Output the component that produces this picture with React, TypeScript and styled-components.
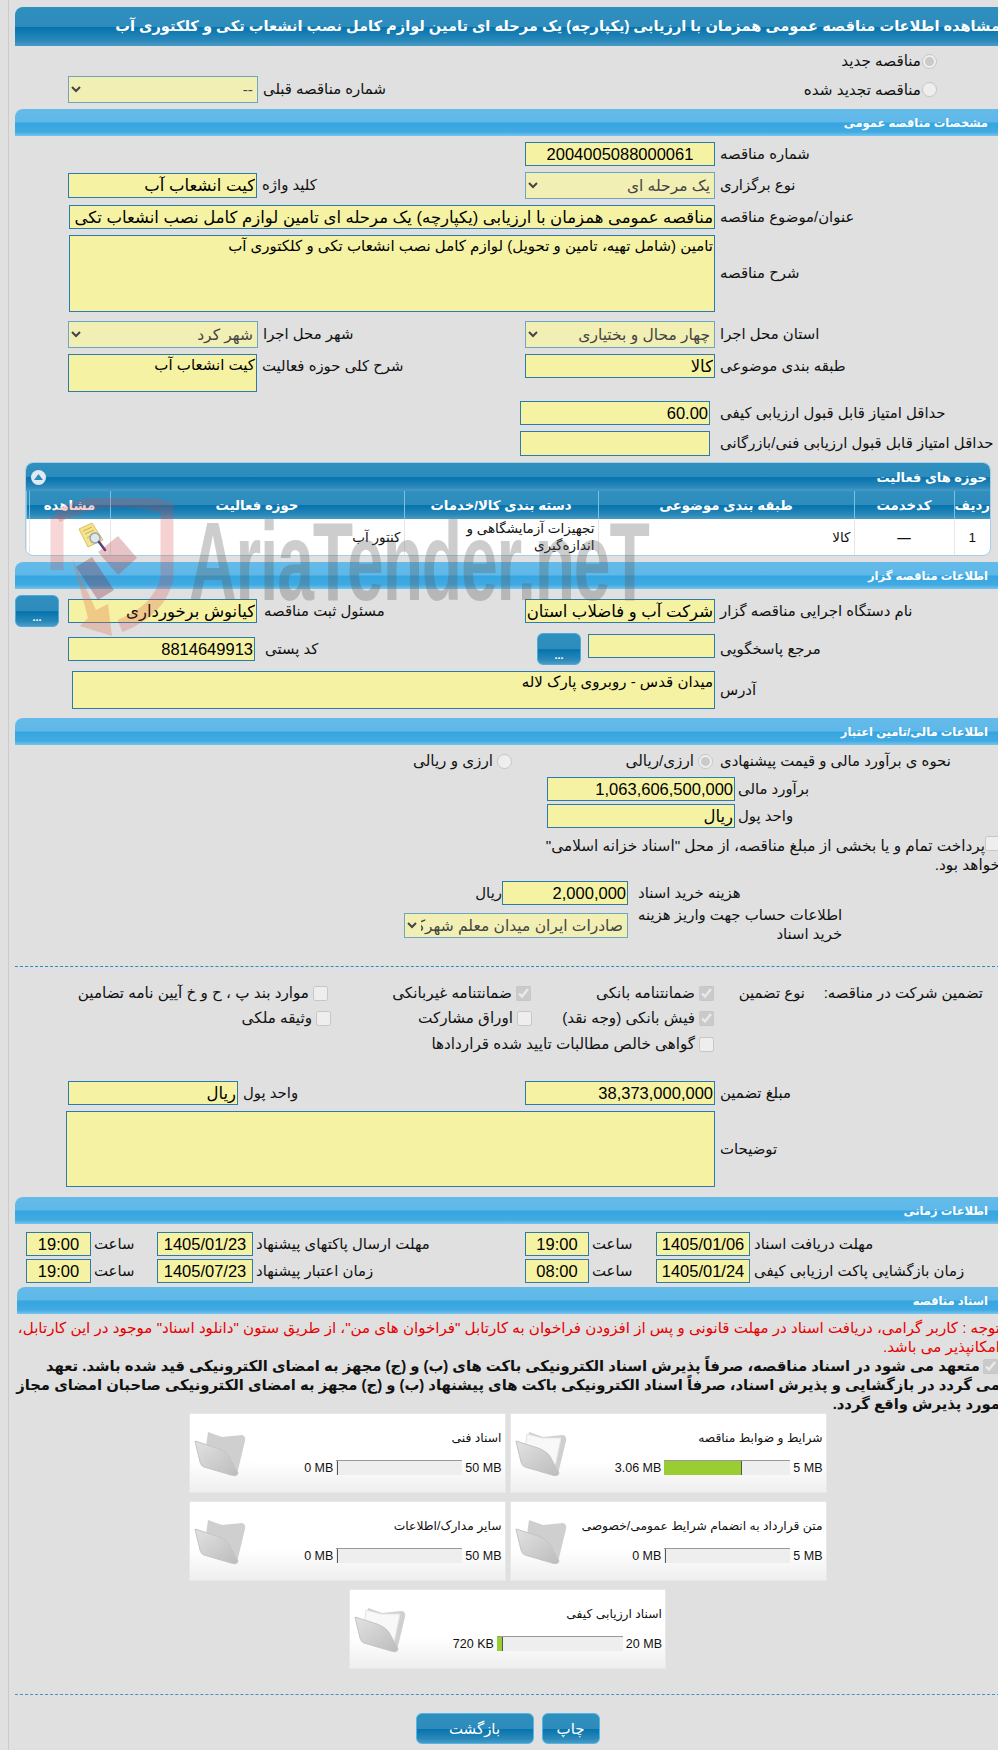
import React from "react";
import styled, { createGlobalStyle } from "styled-components";

const GlobalStyle = createGlobalStyle`
  html, body {
    margin: 0;
    height: 1750px;
    overflow: hidden;
    background: #e0e0e0;
  }
  body {
    font-family: "Liberation Sans", "DejaVu Sans", sans-serif;
    font-size: 14px;
    color: #111;
  }
`;

const darkBar = "linear-gradient(#2f8fbe 0%, #2d8cbc 50%, #0573ad 52%, #2a88b9 85%, #4a9bc6 100%)";
const lightBar = "linear-gradient(#64bbea 0%, #5fb8e8 48%, #35a5e0 52%, #42aae2 85%, #76c5ee 100%)";

const Shell = styled.div`
  position: relative;
  margin-left: 8px;
  width: 992px;
  height: 1750px;
  padding: 7px 0 0 6px;
  box-sizing: border-box;
  border-left: 1px solid #cbcbcb;
`;

const Page = styled.div`
  width: 985px;
  direction: rtl;
`;

const TitleBar = styled.h1`
  margin: 0;
  height: 39px;
  line-height: 39px;
  background: ${darkBar};
  border-top-left-radius: 8px;
  color: #fff;
  font-size: 14.6px;
  font-weight: bold;
  white-space: nowrap;
  overflow: hidden;
`;

const SectionBar = styled.div<{ $mt?: number; $inset?: number }>`
  margin: ${(p) => p.$mt ?? 6}px 0 0 ${(p) => p.$inset ?? 0}px;
  height: 27px;
  line-height: 28px;
  padding-right: 12px;
  background: ${lightBar};
  border-top-left-radius: 8px;
  color: #fff;
  font-size: 11.5px;
  font-weight: bold;
`;

const FormRow = styled.div<{ $h: number; $mt?: number; $top?: boolean }>`
  display: flex;
  height: ${(p) => p.$h}px;
  margin-top: ${(p) => p.$mt ?? 6}px;
  align-items: ${(p) => (p.$top ? "flex-start" : "center")};
`;

const Label = styled.label<{ $w: number; $pad?: number; $dy?: number }>`
  flex: none;
  width: ${(p) => p.$w}px;
  box-sizing: border-box;
  padding-left: ${(p) => p.$pad ?? 5}px;
  padding-top: ${(p) => p.$dy ?? 0}px;
  font-size: 14.9px;
  line-height: 19px;
  white-space: nowrap;
  display: flex;
  justify-content: flex-end;
`;

const TextInput = styled.input<{ $w: number; $h?: number; $center?: boolean; $shift?: number }>`
  flex: none;
  width: ${(p) => p.$w}px;
  height: ${(p) => p.$h ?? 24}px;
  margin: 0 0 ${(p) => p.$shift ?? 0}px 0;
  box-sizing: border-box;
  padding: 0 1px;
  border: 1px solid #2b7cab;
  background: #f5f3a3;
  color: #000;
  font-family: inherit;
  font-size: 16.5px;
  text-align: ${(p) => (p.$center ? "center" : "right")};
  outline: none;
`;

const TextArea = styled.textarea<{ $w: number; $h: number }>`
  flex: none;
  display: block;
  width: ${(p) => p.$w}px;
  height: ${(p) => p.$h}px;
  margin: 0;
  box-sizing: border-box;
  padding: 1px;
  border: 1px solid #2b7cab;
  background: #f5f3a3;
  color: #000;
  font-family: inherit;
  font-size: 15px;
  line-height: 18px;
  resize: none;
  overflow: hidden;
  outline: none;
`;

const Select = styled.select<{ $w: number; $h?: number }>`
  flex: none;
  width: ${(p) => p.$w}px;
  height: ${(p) => p.$h ?? 27}px;
  margin: 0;
  box-sizing: border-box;
  border: 1px solid #6da5c6;
  background-color: #f2efb4;
  color: #444;
  opacity: 1;
  font-family: inherit;
  font-size: 15.5px;
`;

const Option = styled.label<{ $w?: number; $gap?: number }>`
  flex: none;
  display: flex;
  align-items: center;
  gap: ${(p) => p.$gap ?? 4}px;
  width: ${(p) => (p.$w ? `${p.$w}px` : "auto")};
  white-space: nowrap;
  font-size: 15.2px;
  input {
    flex: none;
    margin: 0;
    width: 15px;
    height: 15px;
  }
`;

const RadioRow = styled.div<{ $h: number; $pr: number }>`
  display: flex;
  align-items: center;
  height: ${(p) => p.$h}px;
  padding-right: ${(p) => p.$pr}px;
`;

const DotsButton = styled.button<{ $gapRight?: number }>`
  flex: none;
  width: 44px;
  height: 32px;
  margin: 0 ${(p) => p.$gapRight ?? 0}px 0 0;
  padding: 0 0 3px;
  border: 1px solid #45aee0;
  border-radius: 6px;
  background: ${darkBar};
  color: #fff;
  font-family: inherit;
  font-size: 11px;
  font-weight: bold;
  display: flex;
  align-items: flex-end;
  justify-content: center;
`;

const Panel = styled.div`
  margin: 6px 9px 0 10px;
  height: 94px;
  border-radius: 8px;
  overflow: hidden;
  background: #fff;
  border: 1px solid #a6cfe6;
  box-sizing: border-box;
`;

const PanelHead = styled.div`
  display: flex;
  align-items: center;
  justify-content: space-between;
  height: 28px;
  padding: 0 3px 0 5px;
  background: ${darkBar};
  color: #fff;
  font-size: 13px;
  font-weight: bold;
`;

const Collapse = styled.span`
  width: 15px;
  height: 15px;
  border-radius: 50%;
  background: #dfeaf2;
  display: flex;
  align-items: center;
  justify-content: center;
`;

const GridTable = styled.table`
  width: 100%;
  table-layout: fixed;
  border-collapse: collapse;
`;

const HeadCell = styled.th<{ $w: number }>`
  box-sizing: border-box;
  width: ${(p) => p.$w}px;
  height: 28px;
  padding: 0;
  background: ${darkBar};
  border-left: 1px solid #7fc0e2;
  color: #fff;
  font-size: 13.3px;
  font-weight: bold;
`;

const Cell = styled.td<{ $align?: string }>`
  box-sizing: border-box;
  height: 36px;
  padding: 0 3px;
  border-left: 1px solid #e6e6e6;
  font-size: 13.5px;
  line-height: 17px;
  text-align: ${(p) => p.$align ?? "right"};
  svg {
    display: block;
  }
`;

const CheckNote = styled.div`
  margin-top: 8px;
  height: 38px;
  font-size: 15.3px;
  line-height: 19px;
  white-space: nowrap;
  input {
    margin: 0;
    width: 15px;
    height: 15px;
    vertical-align: top;
  }
`;

const InlineText = styled.span`
  flex: none;
  font-size: 14.9px;
`;

const Dashed = styled.div<{ $mt: number; $color?: string }>`
  margin-top: ${(p) => p.$mt}px;
  border-top: 1px dashed ${(p) => p.$color ?? "#2b8cc0"};
`;

const GuaranteeRow = styled.div<{ $mt: number }>`
  display: flex;
  align-items: center;
  height: 16px;
  margin-top: ${(p) => p.$mt}px;
`;

const GuaranteeHead = styled.span<{ $w: number; $pr?: number }>`
  flex: none;
  width: ${(p) => p.$w}px;
  box-sizing: border-box;
  padding-right: ${(p) => p.$pr ?? 0}px;
  font-size: 14.9px;
  white-space: nowrap;
`;

const RedNote = styled.p`
  margin: 4px 0 0;
  height: 38px;
  color: #e80000;
  font-size: 15.1px;
  line-height: 19px;
  white-space: nowrap;
`;

const BoldNote = styled.div`
  margin-top: 1px;
  height: 56px;
  font-size: 14.8px;
  font-weight: bold;
  line-height: 18.8px;
  white-space: nowrap;
  input {
    margin: 2px 2px 0 3px;
    width: 15px;
    height: 15px;
    vertical-align: top;
  }
`;

const TileGrid = styled.div`
  display: flex;
  flex-wrap: wrap;
  justify-content: center;
  gap: 8px 4px;
  width: 640px;
  margin: 0 auto;
`;

const Tile = styled.div`
  position: relative;
  display: flex;
  width: 317px;
  height: 80px;
  box-sizing: border-box;
  padding: 0 3px 0 4px;
  border: 1px solid #e8e8e8;
  background: linear-gradient(#fff 60%, #efefef 100%);
`;

const TileBody = styled.div`
  flex: 1;
  min-width: 0;
`;

const TileTitle = styled.div`
  margin-top: 16px;
  height: 16px;
  font-size: 12.3px;
  line-height: 16px;
  white-space: nowrap;
`;

const MeterRow = styled.div`
  display: flex;
  align-items: center;
  gap: 3px;
  margin-top: 14px;
`;

const MeterLabel = styled.span`
  direction: ltr;
  unicode-bidi: isolate;
  font-size: 12.5px;
  white-space: nowrap;
`;

const Meter = styled.div`
  flex: none;
  width: 126px;
  height: 14px;
  direction: ltr;
  border-top: 1px solid #999;
  background: #eee;
  box-sizing: content-box;
`;

const MeterFill = styled.div<{ $used: boolean }>`
  height: 100%;
  background: ${(p) => (p.$used ? "#9acd32" : "transparent")};
  border-right: 1px solid #555;
  box-sizing: border-box;
`;

const Folder = styled.svg`
  flex: none;
  align-self: flex-start;
  margin-top: 17px;
  width: 52px;
  height: 46px;
`;

const ActionRow = styled.div`
  display: flex;
  justify-content: center;
  gap: 8px;
  margin-top: 18px;
`;

const ActionButton = styled.button<{ $w: number }>`
  width: ${(p) => p.$w}px;
  height: 31px;
  padding: 0;
  border: 1px solid #52b5e6;
  border-radius: 6px;
  background: ${darkBar};
  color: #fff;
  font-family: inherit;
  font-size: 15px;
`;

const WatermarkLogo = styled.svg`
  position: absolute;
  left: 41px;
  top: 498px;
  width: 135px;
  height: 146px;
  pointer-events: none;
`;

const WatermarkText = styled.div`
  position: absolute;
  left: 180px;
  top: 506px;
  font-family: "Liberation Sans", sans-serif;
  font-size: 112px;
  line-height: 112px;
  font-weight: bold;
  letter-spacing: -2px;
  color: rgba(90, 90, 90, 0.3);
  white-space: nowrap;
  transform-origin: left top;
  transform: scaleX(0.59);
  pointer-events: none;
`;

const FolderIcon = ({ paper }: { paper: boolean }) => (
  <Folder viewBox="0 0 52 46">
    <defs>
      <linearGradient id="folderFront" x1="0" y1="0" x2="1" y2="1">
        <stop offset="0" stopColor="#e2e2e2" />
        <stop offset="1" stopColor="#bcbcbc" />
      </linearGradient>
    </defs>
    <path d="M14 1 L28 6 L38 5 L48 4 Q52 5 51 10 L43 43 L10 30 Z" fill="#cfcfcf" />
    {paper && <path d="M12 3 L27 7 L46 7 L40 36 L10 22 Z" fill="#f8f8f8" stroke="#e4e4e4" />}
    <path d="M1 10 L23 17 Q34 21 37 29 L44 42 Q43 46 37 44 L10 36 Q7 35 6 31 Z" fill="url(#folderFront)" stroke="#c4c4c4" />
  </Folder>
);

const DocIcon = () => (
  <svg width="29" height="30" viewBox="0 0 29 30">
    <path d="M1 7 L14 1 L25 18 L10 25 Z" fill="#f6e38f" stroke="#dcc05c" />
    <path d="M5 9 L14 5 M7 12 L16 8 M9 16 L14 13" stroke="#cdb052" strokeWidth="1" />
    <circle cx="17" cy="16" r="5" fill="#dde7ee" stroke="#98a4ad" strokeWidth="1.5" />
    <path d="M21 20 L27 28" stroke="#5a3f8a" strokeWidth="2.5" strokeLinecap="round" />
  </svg>
);

type TileData = { title: string; used: string; max: string; pct: number; paper: boolean };

const tiles: TileData[] = [
  { title: "شرایط و ضوابط مناقصه", used: "3.06 MB", max: "5 MB", pct: 62, paper: true },
  { title: "اسناد فنی", used: "0 MB", max: "50 MB", pct: 0, paper: false },
  { title: "متن قرارداد به انضمام شرایط عمومی/خصوصی", used: "0 MB", max: "5 MB", pct: 0, paper: false },
  { title: "سایر مدارک/اطلاعات", used: "0 MB", max: "50 MB", pct: 0, paper: false },
  { title: "اسناد ارزیابی کیفی", used: "720 KB", max: "20 MB", pct: 5, paper: true },
];

const App = () => {
  return (
    <Shell>
      <GlobalStyle />
      <Page>
        <TitleBar>
          مشاهده اطلاعات مناقصه عمومی همزمان با ارزیابی (یکپارچه) یک مرحله ای تامین لوازم کامل نصب انشعاب تکی و کلکتوری آب
        </TitleBar>

        <RadioRow $h={30} $pr={63}>
          <Option $gap={1}>
            <input type="radio" disabled defaultChecked />
            مناقصه جدید
          </Option>
        </RadioRow>
        <RadioRow $h={27} $pr={63}>
          <Option $w={412} $gap={1}>
            <input type="radio" disabled />
            مناقصه تجدید شده
          </Option>
          <Label $w={267} $pad={5}>شماره مناقصه قبلی</Label>
          <Select $w={190} disabled>
            <option>--</option>
          </Select>
        </RadioRow>

        <SectionBar>مشخصات مناقصه عمومی</SectionBar>
        <FormRow $h={24}>
          <Label $w={285}>شماره مناقصه</Label>
          <TextInput $w={190} $center readOnly value="2004005088000061" />
        </FormRow>
        <FormRow $h={27}>
          <Label $w={285}>نوع برگزاری</Label>
          <Select $w={190} disabled>
            <option>یک مرحله ای</option>
          </Select>
          <Label $w={268}>کلید واژه</Label>
          <TextInput $w={189} $h={25} readOnly value="کیت انشعاب آب" />
        </FormRow>
        <FormRow $h={24}>
          <Label $w={285}>عنوان/موضوع مناقصه</Label>
          <TextInput
            $w={646}
            readOnly
            value="مناقصه عمومی همزمان با ارزیابی (یکپارچه) یک مرحله ای تامین لوازم کامل نصب انشعاب تکی و کلکتوری آب"
          />
        </FormRow>
        <FormRow $h={77}>
          <Label $w={285}>شرح مناقصه</Label>
          <TextArea $w={646} $h={77} readOnly value="تامین (شامل تهیه، تامین و تحویل) لوازم کامل نصب انشعاب تکی و کلکتوری آب" />
        </FormRow>
        <FormRow $h={27} $mt={9}>
          <Label $w={285}>استان محل اجرا</Label>
          <Select $w={190} disabled>
            <option>چهار محال و بختیاری</option>
          </Select>
          <Label $w={267}>شهر محل اجرا</Label>
          <Select $w={190} disabled>
            <option>شهر کرد</option>
          </Select>
        </FormRow>
        <FormRow $h={38} $top>
          <Label $w={285} $dy={3}>طبقه بندی موضوعی</Label>
          <TextInput $w={190} readOnly value="کالا" />
          <Label $w={268} $dy={3}>شرح کلی حوزه فعالیت</Label>
          <TextArea $w={189} $h={38} readOnly value="کیت انشعاب آب" />
        </FormRow>
        <FormRow $h={24} $mt={9}>
          <Label $w={290} $pad={10}>حداقل امتیاز قابل قبول ارزیابی کیفی</Label>
          <TextInput $w={190} readOnly value="60.00" />
        </FormRow>
        <FormRow $h={25}>
          <Label $w={290} $pad={10}>حداقل امتیاز قابل قبول ارزیابی فنی/بازرگانی</Label>
          <TextInput $w={190} $h={25} readOnly value="" />
        </FormRow>

        <Panel>
          <PanelHead>
            حوزه های فعالیت
            <Collapse>
              <svg width="9" height="6" viewBox="0 0 9 6">
                <path d="M4.5 0 L9 6 L0 6 Z" fill="#2d8cbc" />
              </svg>
            </Collapse>
          </PanelHead>
          <GridTable>
            <thead>
              <tr>
                <HeadCell $w={36}>ردیف</HeadCell>
                <HeadCell $w={100}>کدخدمت</HeadCell>
                <HeadCell $w={256}>طبقه بندی موضوعی</HeadCell>
                <HeadCell $w={194}>دسته بندی کالا/خدمات</HeadCell>
                <HeadCell $w={294}>حوزه فعالیت</HeadCell>
                <HeadCell $w={81}>مشاهده</HeadCell>
                <HeadCell $w={3} />
              </tr>
            </thead>
            <tbody>
              <tr>
                <Cell $align="center">1</Cell>
                <Cell $align="center"><b>—</b></Cell>
                <Cell>کالا</Cell>
                <Cell>تجهیزات آزمایشگاهی و اندازه‌گیری</Cell>
                <Cell>کنتور آب</Cell>
                <Cell $align="right"><DocIcon /></Cell>
                <Cell />
              </tr>
            </tbody>
          </GridTable>
        </Panel>

        <SectionBar>اطلاعات مناقصه گزار</SectionBar>
        <FormRow $h={32}>
          <Label $w={285}>نام دستگاه اجرایی مناقصه گزار</Label>
          <TextInput $w={190} readOnly value="شرکت آب و فاضلاب استان چهار محال و بختیاری" />
          <Label $w={268} $pad={7}>مسئول ثبت مناقصه</Label>
          <TextInput $w={189} readOnly value="کیانوش برخورداری" />
          <DotsButton $gapRight={9}>...</DotsButton>
        </FormRow>
        <FormRow $h={32}>
          <Label $w={285}>مرجع پاسخگویی</Label>
          <TextInput $w={127} $shift={6} readOnly value="" />
          <DotsButton $gapRight={7}>...</DotsButton>
          <Label $w={282} $pad={10}>کد پستی</Label>
          <TextInput $w={187} readOnly value="8814649913" />
        </FormRow>
        <FormRow $h={38}>
          <Label $w={285}>آدرس</Label>
          <TextArea $w={643} $h={38} readOnly value="میدان قدس - روبروی پارک لاله" />
        </FormRow>

        <SectionBar $mt={9}>اطلاعات مالی/تامین اعتبار</SectionBar>
        <FormRow $h={22} $mt={5}>
          <Label $w={287} $pad={7}>نحوه ی برآورد مالی و قیمت پیشنهادی</Label>
          <Option $w={201}>
            <input type="radio" disabled defaultChecked />
            ارزی/ریالی
          </Option>
          <Option>
            <input type="radio" disabled />
            ارزی و ریالی
          </Option>
        </FormRow>
        <FormRow $h={24} $mt={5}>
          <Label $w={265} $pad={3}>برآورد مالی</Label>
          <TextInput $w={188} readOnly value="1,063,606,500,000" />
        </FormRow>
        <FormRow $h={24} $mt={3}>
          <Label $w={265} $pad={3}>واحد پول</Label>
          <TextInput $w={188} readOnly value="ریال" />
        </FormRow>
        <CheckNote>
          <input type="checkbox" disabled />
          پرداخت تمام و یا بخشی از مبلغ مناقصه، از محل "اسناد خزانه اسلامی"
          <br />
          خواهد بود.
        </CheckNote>
        <FormRow $h={24} $mt={7}>
          <Label $w={372} $pad={10}>هزینه خرید اسناد</Label>
          <TextInput $w={126} readOnly value="2,000,000" />
          <InlineText>ریال</InlineText>
        </FormRow>
        <FormRow $h={34} $mt={3}>
          <Label $w={372} $pad={10}>
            <span>
              اطلاعات حساب جهت واریز هزینه
              <br />
              خرید اسناد
            </span>
          </Label>
          <Select $w={224} $h={25} disabled>
            <option>صادرات ایران میدان معلم شهرکرد</option>
          </Select>
        </FormRow>

        <Dashed $mt={24} />

        <GuaranteeRow $mt={18}>
          <GuaranteeHead $w={195} $pr={17}>تضمین شرکت در مناقصه:</GuaranteeHead>
          <GuaranteeHead $w={91}>نوع تضمین</GuaranteeHead>
          <Option $w={183}>
            <input type="checkbox" disabled defaultChecked />
            ضمانتنامه بانکی
          </Option>
          <Option $w={203}>
            <input type="checkbox" disabled defaultChecked />
            ضمانتنامه غیربانکی
          </Option>
          <Option>
            <input type="checkbox" disabled />
            موارد بند پ ، ح و خ آیین نامه تضامین
          </Option>
        </GuaranteeRow>
        <GuaranteeRow $mt={9}>
          <GuaranteeHead $w={286} />
          <Option $w={182}>
            <input type="checkbox" disabled defaultChecked />
            فیش بانکی (وجه نقد)
          </Option>
          <Option $w={201}>
            <input type="checkbox" disabled />
            اوراق مشارکت
          </Option>
          <Option>
            <input type="checkbox" disabled />
            وثیقه ملکی
          </Option>
        </GuaranteeRow>
        <GuaranteeRow $mt={10}>
          <GuaranteeHead $w={286} />
          <Option>
            <input type="checkbox" disabled />
            گواهی خالص مطالبات تایید شده قراردادها
          </Option>
        </GuaranteeRow>

        <FormRow $h={24} $mt={29}>
          <Label $w={285}>مبلغ تضمین</Label>
          <TextInput $w={190} readOnly value="38,373,000,000" />
          <Label $w={287}>واحد پول</Label>
          <TextInput $w={170} readOnly value="ریال" />
        </FormRow>
        <FormRow $h={76}>
          <Label $w={285}>توضیحات</Label>
          <TextArea $w={649} $h={76} readOnly value="" />
        </FormRow>

        <SectionBar $mt={10}>اطلاعات زمانی</SectionBar>
        <FormRow $h={24} $mt={8}>
          <Label $w={250} $pad={4}>مهلت دریافت اسناد</Label>
          <TextInput $w={94} $center readOnly value="1405/01/06" />
          <Label $w={67} $pad={3}>ساعت</Label>
          <TextInput $w={64} $center readOnly value="19:00" />
          <Label $w={272} $pad={3}>مهلت ارسال پاکتهای پیشنهاد</Label>
          <TextInput $w={96} $center readOnly value="1405/01/23" />
          <Label $w={66} $pad={3}>ساعت</Label>
          <TextInput $w={65} $center readOnly value="19:00" />
        </FormRow>
        <FormRow $h={24} $mt={3}>
          <Label $w={250} $pad={4}>زمان بازگشایی پاکت ارزیابی کیفی</Label>
          <TextInput $w={94} $center readOnly value="1405/01/24" />
          <Label $w={67} $pad={3}>ساعت</Label>
          <TextInput $w={64} $center readOnly value="08:00" />
          <Label $w={272} $pad={3}>زمان اعتبار پیشنهاد</Label>
          <TextInput $w={96} $center readOnly value="1405/07/23" />
          <Label $w={66} $pad={3}>ساعت</Label>
          <TextInput $w={65} $center readOnly value="19:00" />
        </FormRow>

        <SectionBar $mt={4} $inset={2}>اسناد مناقصه</SectionBar>
        <RedNote>
          توجه : کاربر گرامی، دریافت اسناد در مهلت قانونی و پس از افزودن فراخوان به کارتابل "فراخوان های من"، از طریق ستون "دانلود اسناد" موجود در این کارتابل،
          <br />
          امکانپذیر می باشد.
        </RedNote>
        <BoldNote>
          <input type="checkbox" disabled defaultChecked />
          متعهد می شود در اسناد مناقصه، صرفاً پذیرش اسناد الکترونیکی باکت های (ب) و (ج) مجهز به امضای الکترونیکی قید شده باشد. تعهد
          <br />
          می گردد در بازگشایی و پذیرش اسناد، صرفاً اسناد الکترونیکی باکت های پیشنهاد (ب) و (ج) مجهز به امضای الکترونیکی صاحبان امضای مجاز
          <br />
          مورد پذیرش واقع گردد.
        </BoldNote>

        <TileGrid>
          {tiles.map((t) => (
            <Tile key={t.title}>
              <TileBody>
                <TileTitle>{t.title}</TileTitle>
                <MeterRow>
                  <MeterLabel>{t.max}</MeterLabel>
                  <Meter>
                    <MeterFill $used={t.pct > 0} style={{ width: `${Math.max(t.pct, 1)}%` }} />
                  </Meter>
                  <MeterLabel>{t.used}</MeterLabel>
                </MeterRow>
              </TileBody>
              <FolderIcon paper={t.paper} />
            </Tile>
          ))}
        </TileGrid>

        <Dashed $mt={25} $color="#4a93b8" />
        <ActionRow>
          <ActionButton $w={58}>چاپ</ActionButton>
          <ActionButton $w={118}>بازگشت</ActionButton>
        </ActionRow>
      </Page>

      <WatermarkLogo viewBox="0 0 135 146">
        <path d="M7 18 Q62 -8 117 10 L117 80 Q110 112 70 128" fill="none" stroke="rgba(215,70,70,0.25)" strokeWidth="13" />
        <path d="M7 18 L7 72" fill="none" stroke="rgba(215,70,70,0.22)" strokeWidth="13" />
        <path d="M68 38 L87 60 L68 77 L48 54 Z" fill="rgba(180,60,70,0.3)" />
        <path d="M26 69 L42 59 L64 92 L48 102 Z" fill="rgba(130,45,60,0.32)" />
        <path d="M22 60 L46 112 L58 106 L62 138 L30 128 L38 120 Z" fill="rgba(225,110,70,0.3)" />
      </WatermarkLogo>
      <WatermarkText>AriaTender.neT</WatermarkText>
    </Shell>
  );
};

export default App;
